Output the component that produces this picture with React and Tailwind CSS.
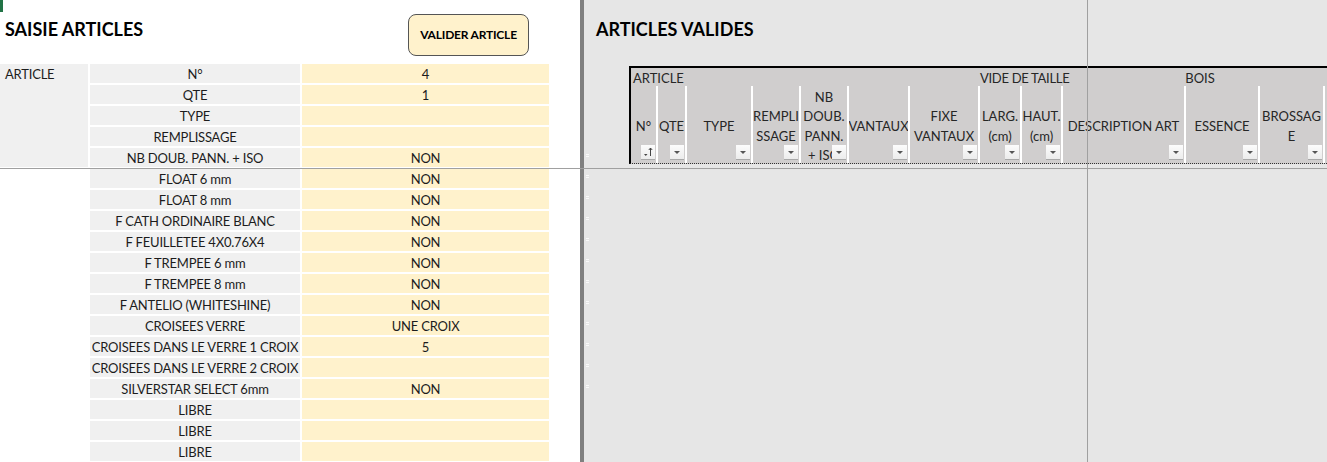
import React from 'react'

const saisieRows = [
  ['N°', '4'],
  ['QTE', '1'],
  ['TYPE', ''],
  ['REMPLISSAGE', ''],
  ['NB DOUB. PANN. + ISO', 'NON'],
  ['FLOAT 6 mm', 'NON'],
  ['FLOAT 8 mm', 'NON'],
  ['F CATH ORDINAIRE BLANC', 'NON'],
  ['F FEUILLETEE 4X0.76X4', 'NON'],
  ['F TREMPEE 6 mm', 'NON'],
  ['F TREMPEE 8 mm', 'NON'],
  ['F ANTELIO (WHITESHINE)', 'NON'],
  ['CROISEES VERRE', 'UNE CROIX'],
  ['CROISEES DANS LE VERRE 1 CROIX', '5'],
  ['CROISEES DANS LE VERRE 2 CROIX', ''],
  ['SILVERSTAR SELECT 6mm', 'NON'],
  ['LIBRE', ''],
  ['LIBRE', ''],
  ['LIBRE', ''],
]

const columns = [
  { w: 'w-[27px]', label: ['N°'], sort: true },
  { w: 'w-[29px]', label: ['QTE'] },
  { w: 'w-[66px]', label: ['TYPE'] },
  { w: 'w-[48px]', label: ['REMPLI', 'SSAGE'] },
  { w: 'w-[48px]', label: ['NB', 'DOUB.', 'PANN.', '+ ISO'] },
  { w: 'w-[61px]', label: ['VANTAUX'] },
  { w: 'w-[70px]', label: ['FIXE', 'VANTAUX'] },
  { w: 'w-[42px]', label: ['LARG.', '(cm)'] },
  { w: 'w-[41px]', label: ['HAUT.', '(cm)'] },
  { w: 'w-[123px]', label: ['DESCRIPTION ART'] },
  { w: 'w-[74px]', label: ['ESSENCE'] },
  { w: 'w-[65px]', label: ['BROSSAG', 'E'] },
]

function FilterButton({ sort }) {
  return (
    <div className="absolute right-[1px] bottom-[3px] w-[14px] h-[15px] bg-gradient-to-b from-[#fcfcfc] to-[#ececec] border-b border-[#a8a8a8] flex items-center justify-center">
      {sort ? (
        <svg width="12" height="12" viewBox="0 0 12 12">
          <path d="M2 8 L5.5 8 L3.75 10 Z" fill="#444" />
          <path d="M8.5 2 L8.5 10" stroke="#444" strokeWidth="1" />
          <path d="M6.8 4 L8.5 2 L10.2 4" stroke="#444" strokeWidth="1" fill="none" />
        </svg>
      ) : (
        <svg width="8" height="6" viewBox="0 0 8 6">
          <path d="M1 2 L7 2 L4 5 Z" fill="#555" />
        </svg>
      )}
    </div>
  )
}

export default function App() {
  return (
    <div className="relative w-[1327px] h-[462px] overflow-hidden flex font-['Lato',sans-serif] text-[#1c1c1c]">
      {/* excel selection corner */}
      <div className="absolute top-0 left-0 w-[3px] h-[12px] bg-[#217346]" />

      {/* Saisie */}
      <div className="w-[580px] shrink-0 bg-white flex flex-col">
        <div className="h-[64px] flex items-start">
          <h1 className="w-[408px] pl-[5px] pt-[18px] text-[18px] leading-[22px] font-bold text-black">SAISIE ARTICLES</h1>
          <button className="mt-[14px] w-[121px] h-[42px] rounded-[8px] border border-[#555] bg-[#fff2cc] text-[12px] font-bold text-black tracking-[-0.2px]">
            VALIDER ARTICLE
          </button>
        </div>
        <div className="grid grid-cols-[88px_210px_247px] gap-x-[2px] gap-y-[2px] auto-rows-[19px] text-[13px] leading-[19px] tracking-[-0.2px]">
          <div className="row-span-5 bg-[#f0f0f0] pl-[5px] pt-px">ARTICLE</div>
          {saisieRows.map(([label, value], i) => (
            <React.Fragment key={i}>
              {i >= 5 && <div />}
              <div className="bg-[#f0f0f0] pt-px text-center whitespace-nowrap">{label}</div>
              <div className="bg-[#fff2cc] pt-px text-center">{value}</div>
            </React.Fragment>
          ))}
        </div>
      </div>

      <div className="w-[4px] shrink-0 bg-[#808080]" />

      {/* Articles valides */}
      <div className="relative flex-1 bg-[#e6e6e6] flex flex-col">
        <h1 className="h-[66px] pl-[12px] pt-[18px] text-[18px] leading-[22px] font-bold text-black">ARTICLES VALIDES</h1>
        <div className="ml-[45px] border-l-2 border-t-2 border-black bg-[#d0cece] border-b border-b-[#333] [border-bottom-style:dotted] overflow-hidden text-[13px] text-[#262626]">
          <div className="flex h-[18px] leading-[21px] whitespace-nowrap">
            <div className="w-[349px] shrink-0 pl-[2px]">ARTICLE</div>
            <div className="w-[83px] shrink-0 text-center tracking-[-0.3px]">VIDE DE TAILLE</div>
            <div className="w-[274px] shrink-0 text-center">BOIS</div>
          </div>
          <div className="flex h-[77px]">
            {columns.map((c, i) => (
              <div key={i} className={`${c.w} shrink-0 relative border-r-2 border-white pt-[4px] flex items-center justify-center text-center leading-[19.5px] overflow-hidden whitespace-nowrap`}>
                <div>
                  {c.label.map((l, j) => (
                    <div key={j}>{l}</div>
                  ))}
                </div>
                <FilterButton sort={c.sort} />
              </div>
            ))}
            <div className="flex-1" />
          </div>
        </div>

        {/* row markers on pane edge */}
        <div className="absolute left-[2px] top-[154px] flex flex-col gap-[18px]">
          {Array.from({ length: 12 }).map((_, i) => (
            <div key={i} className="flex flex-col gap-[1px]">
              <div className="w-[3px] h-px bg-[#fafafa]" />
              <div className="w-[3px] h-px bg-[#fafafa]" />
            </div>
          ))}
        </div>

        {/* vertical freeze line */}
        <div className="absolute top-0 bottom-0 left-[503px] w-px bg-[#a0a0a0]" />
      </div>

      {/* horizontal freeze line */}
      <div className="absolute left-0 right-0 top-[168px] h-px bg-[#a0a0a0]" />
    </div>
  )
}
